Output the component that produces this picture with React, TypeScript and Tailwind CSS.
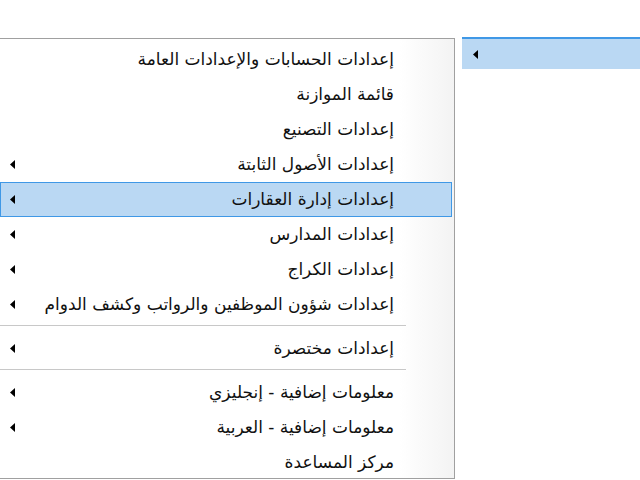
import React from "react";

type Item = { label: string; arrow?: boolean; active?: boolean } | { sep: true };

const items: Item[] = [
  { label: "إعدادات الحسابات والإعدادات العامة" },
  { label: "قائمة الموازنة" },
  { label: "إعدادات التصنيع" },
  { label: "إعدادات الأصول الثابتة", arrow: true },
  { label: "إعدادات إدارة العقارات", arrow: true, active: true },
  { label: "إعدادات المدارس", arrow: true },
  { label: "إعدادات الكراج", arrow: true },
  { label: "إعدادات شؤون الموظفين والرواتب وكشف الدوام", arrow: true },
  { sep: true },
  { label: "إعدادات مختصرة", arrow: true },
  { sep: true },
  { label: "معلومات إضافية - إنجليزي", arrow: true },
  { label: "معلومات إضافية - العربية", arrow: true },
  { label: "مركز المساعدة" },
];

function Arrow() {
  return (
    <svg width="5" height="9" viewBox="0 0 5 9" className="block">
      <polygon points="5,0 5,9 0,4.5" fill="#000" />
    </svg>
  );
}

export default function App() {
  return (
    <div
      className="w-[640px] h-[480px] bg-white overflow-hidden flex items-start"
      style={{ fontFamily: '"DejaVu Sans", Tahoma, sans-serif' }}
    >
      <div className="mt-[38px] w-[455px] h-[441px] border-t border-r border-b border-[#a0a0a0] bg-gradient-to-r from-white from-[88%] to-[#f3f3f3] pt-[3px] shrink-0">
        {items.map((it, i) =>
          "sep" in it ? (
            <div key={i} className="h-[9px] flex items-start pt-[3px]">
              <div className="w-[406px] h-[2px] border-t border-[#c8c8c8] border-b border-b-white" />
            </div>
          ) : (
            <div
              key={i}
              dir="rtl"
              className={`h-[35px] flex items-center justify-between pr-[57px] pl-[9px] mr-[2px] text-[17px] text-[#111] ${
                it.active ? "bg-[#bad8f3] border border-[#3f98e6]" : "border border-transparent"
              }`}
            >
              <span>{it.label}</span>
              {it.arrow ? <Arrow /> : <span />}
            </div>
          )
        )}
      </div>
      <div className="ml-[7px] mt-[37px] flex-1 h-[32px] bg-[#bad8f3] border-t-2 border-[#3f98e6] flex items-center pl-[11px]">
        <Arrow />
      </div>
    </div>
  );
}
